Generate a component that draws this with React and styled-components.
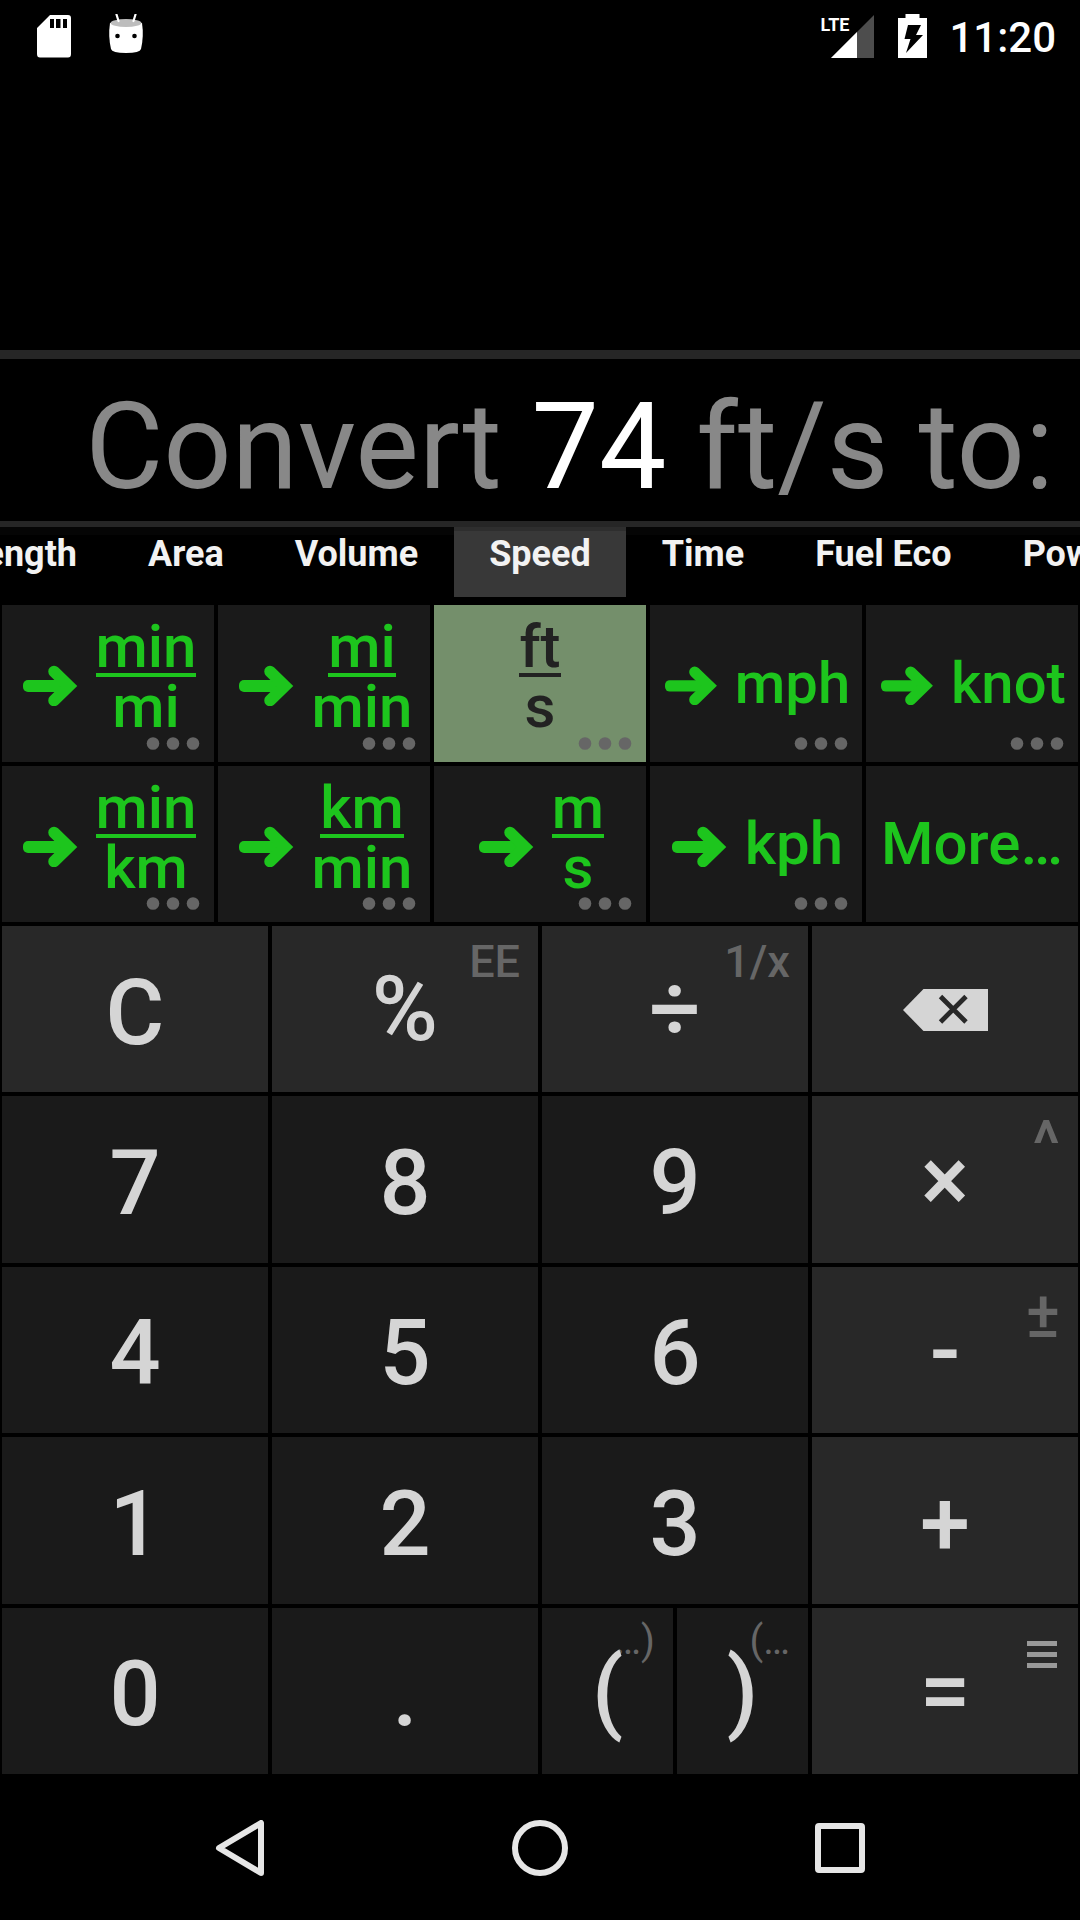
import React, { useLayoutEffect, useRef } from "react";
import styled, { createGlobalStyle } from "styled-components";

const GlobalStyle = createGlobalStyle`
  *, *::before, *::after { box-sizing: border-box; }
  body {
    margin: 0;
    background: #000;
    color: #fff;
    font-family: Roboto, "Noto Sans", sans-serif;
  }
  button {
    margin: 0;
    padding: 0;
    border: 0;
    background: none;
    color: inherit;
    font: inherit;
  }
  svg { display: block; flex: none; }
`;

const Screen = styled.div`
  display: flex;
  flex-direction: column;
  min-height: 100vh;
  overflow: hidden;
`;

const StatusBar = styled.header`
  display: flex;
  justify-content: space-between;
  align-items: center;
  height: 72px;
  padding: 0 24px 0 36px;
`;

const StatusGroup = styled.div`
  display: flex;
  align-items: center;
  gap: ${(p) => p.$gap}px;
`;

const Signal = styled.div`
  position: relative;
  margin-right: 2px;
`;

const NetworkType = styled.span`
  position: absolute;
  top: 0;
  left: -11px;
  font-size: 18px;
  line-height: 20px;
  font-weight: 700;
`;

const Clock = styled.time`
  padding-top: 3px;
  font-size: 42px;
  line-height: 48px;
  font-weight: 500;
`;

const History = styled.section`
  flex: 1 1 auto;
  min-height: 120px;
`;

const Display = styled.output`
  display: block;
  border-top: 9px solid #262626;
  border-bottom: 6px solid #262626;
  padding: 18px 26px 4px;
  font-size: 120px;
  line-height: 140px;
  text-align: right;
  white-space: nowrap;
  color: #888;
`;

const Amount = styled.span`
  color: #fff;
`;

const TabBar = styled.nav`
  display: flex;
  gap: 1px;
  position: relative;
  height: 76px;
  overflow: hidden;
  background: linear-gradient(#050505 8px, #000 8px);
`;

const Tab = styled.button`
  flex: none;
  height: 70px;
  padding: 0 35px 20px;
  border-top: 4px solid ${(p) => (p.$selected ? "#2e2e2e" : "transparent")};
  background: ${(p) => (p.$selected ? "#383838" : "transparent")};
  color: #f2f2f2;
  font-size: 36px;
  line-height: 42px;
  font-weight: 700;
`;

const UnitGrid = styled.section`
  display: grid;
  grid-template-columns: repeat(5, minmax(0, 1fr));
  grid-template-rows: repeat(2, 1fr);
  gap: 4px;
  min-height: 321px;
  padding: 2px;
`;

const UnitKey = styled.button`
  position: relative;
  display: flex;
  align-items: center;
  justify-content: center;
  background: ${(p) => (p.$selected ? "#748f6b" : "#1a1a1a")};
  color: ${(p) => (p.$selected ? "#222" : "#1dc51d")};
  font-size: ${(p) => (p.$compact ? 58 : 60)}px;
  line-height: 60px;
  font-weight: 500;
  white-space: nowrap;
`;

const ArrowIcon = styled.svg`
  width: ${(p) => (p.$compact ? 73 : 76)}px;
  height: ${(p) => (p.$compact ? 44 : 46)}px;
`;

const Fraction = styled.span`
  display: flex;
  flex-direction: column;
  align-items: center;
  margin-bottom: 8px;
`;

const Numerator = styled.span`
  line-height: 52px;
  border-bottom: 4px solid currentColor;
`;

const Denominator = styled.span`
  line-height: 60px;
`;

const MoreDots = styled.svg`
  position: absolute;
  right: 14px;
  bottom: 12px;
`;

const Keypad = styled.section`
  display: grid;
  grid-template-columns: repeat(8, minmax(0, 1fr));
  grid-template-rows: repeat(5, 1fr);
  gap: 4px;
  min-height: 852px;
  padding: 2px;
`;

const PadKey = styled.button`
  position: relative;
  grid-column: span ${(p) => (p.$half ? 1 : 2)};
  display: flex;
  align-items: center;
  justify-content: center;
  padding-top: ${(p) => (p.$symbol ? 2 : 9)}px;
  background: ${(p) => (p.$operator ? "#282828" : "#1a1a1a")};
  color: #d5d5d5;
  font-size: 90px;
  line-height: 106px;
  font-weight: 500;
`;

const KeyFace = styled.span`
  position: relative;
`;

const Hint = styled.span`
  position: absolute;
  top: 7px;
  right: 18px;
  color: #666;
  font-size: ${(p) => p.$size}px;
  line-height: 1.3;
  font-weight: ${(p) => p.$weight || 500};
`;

const HintIcon = styled.svg`
  position: absolute;
  top: 33px;
  right: 21px;
`;

const NavBar = styled.footer`
  display: flex;
  height: 144px;
  padding: 0 calc(100% / 12);
`;

const NavButton = styled.button`
  flex: 1;
  display: flex;
  align-items: center;
  justify-content: center;
`;

const TABS = ["Length", "Area", "Volume", "Speed", "Time", "Fuel Eco", "Power"];
const SELECTED_TAB = "Speed";

const UNITS = [
  { top: "min", bottom: "mi" },
  { top: "mi", bottom: "min" },
  { top: "ft", bottom: "s", selected: true },
  { name: "mph", compact: true },
  { name: "knot", compact: true },
  { top: "min", bottom: "km" },
  { top: "km", bottom: "min" },
  { top: "m", bottom: "s" },
  { name: "kph" },
];

const KEYS = [
  { face: "C", operator: true },
  { face: "%", operator: true, symbol: true, hint: "EE" },
  { face: "÷", operator: true, symbol: true, hint: "1/x" },
  { icon: "backspace", operator: true, symbol: true },
  { face: "7" },
  { face: "8" },
  { face: "9" },
  { face: "×", operator: true, symbol: true, hint: "^", hintSize: 64 },
  { face: "4" },
  { face: "5" },
  { face: "6" },
  { face: "-", operator: true, symbol: true, hint: "±", hintSize: 64 },
  { face: "1" },
  { face: "2" },
  { face: "3" },
  { face: "+", operator: true },
  { face: "0" },
  { face: "." },
  { face: "(", half: true, symbol: true, hint: "…)", hintSize: 40, hintWeight: 400 },
  { face: ")", half: true, symbol: true, hint: "(…", hintSize: 40, hintWeight: 400 },
  { face: "=", operator: true, symbol: true, menu: true },
];

function SdCard() {
  return (
    <svg width="36" height="44" viewBox="0 0 36 44" aria-hidden="true">
      <path
        fill="#fff"
        fillRule="evenodd"
        d="M14 1H32Q35 1 35 4V40Q35 43.500 32 43.500H4Q1 43.500 1 40V14ZM14 5V14H18V5ZM20 5V14H24.500V5ZM27 5V14H31V5Z"
      />
    </svg>
  );
}

function AndroidHead() {
  return (
    <svg width="36" height="44" viewBox="0 0 36 44" aria-hidden="true">
      <path
        fill="#fff"
        d="M2 9H34Q36 22 33 35Q32 39 18 39Q4 39 3 35Q0 22 2 9Z"
      />
      <ellipse cx="18" cy="9" rx="15.500" ry="4" fill="#bdbdbd" />
      <path
        stroke="#fff"
        strokeWidth="2.200"
        strokeLinecap="round"
        d="M8.500 0.500L10.500 7M27.500 0.500L25.500 7"
      />
      <circle cx="9.500" cy="22" r="2.300" />
      <circle cx="26.500" cy="22" r="2.300" />
    </svg>
  );
}

function SignalIcon() {
  return (
    <svg width="43" height="43" viewBox="0 0 43 43" aria-hidden="true">
      <path fill="#4d4d4d" d="M43 0V43H0Z" />
      <path fill="#fff" d="M26 17V43H0Z" />
    </svg>
  );
}

function BatteryIcon() {
  return (
    <svg width="29" height="44" viewBox="0 0 29 44" aria-hidden="true">
      <path fill="#fff" d="M7.500 0H21.500V4H29V44H0V4H7.500Z" />
      <path d="M10 11H23L18 21H25L8 39L12.500 25H6.500Z" />
    </svg>
  );
}

function Arrow({ compact }) {
  return (
    <ArrowIcon $compact={compact} viewBox="0 0 76 46" aria-hidden="true">
      <rect x="3" y="20" width="46" height="12" rx="5" fill="currentColor" />
      <path
        fill="none"
        stroke="currentColor"
        strokeWidth="11.500"
        strokeLinecap="round"
        d="M34 11.500L49 26L34 40.500"
      />
    </ArrowIcon>
  );
}

function Dots() {
  return (
    <MoreDots width="54" height="13" viewBox="0 0 54 13" fill="#666" aria-hidden="true">
      <circle cx="7" cy="6.500" r="6.300" />
      <circle cx="27" cy="6.500" r="6.300" />
      <circle cx="47" cy="6.500" r="6.300" />
    </MoreDots>
  );
}

function Tabs() {
  const bar = useRef(null);
  const current = useRef(null);

  // Keep the selected category in the middle of the strip.
  useLayoutEffect(() => {
    const tab = current.current;
    bar.current.scrollLeft =
      tab.offsetLeft + tab.offsetWidth / 2 - bar.current.clientWidth / 2;
  }, []);

  return (
    <TabBar ref={bar} aria-label="Unit types">
      {TABS.map((name) => (
        <Tab
          key={name}
          type="button"
          ref={name === SELECTED_TAB ? current : null}
          $selected={name === SELECTED_TAB}
        >
          {name}
        </Tab>
      ))}
    </TabBar>
  );
}

function Unit({ unit }) {
  return (
    <UnitKey type="button" $selected={unit.selected} $compact={unit.compact}>
      {!unit.selected && <Arrow compact={unit.compact} />}
      {unit.name ? (
        <span>{unit.name}</span>
      ) : (
        <Fraction>
          <Numerator>{unit.top}</Numerator>
          <Denominator>{unit.bottom}</Denominator>
        </Fraction>
      )}
      <Dots />
    </UnitKey>
  );
}

function Key({ item }) {
  return (
    <PadKey
      type="button"
      $operator={item.operator}
      $symbol={item.symbol}
      $half={item.half}
      aria-label={item.icon}
    >
      {item.hint && (
        <Hint $size={item.hintSize || 45} $weight={item.hintWeight}>
          {item.hint}
        </Hint>
      )}
      {item.menu && (
        <HintIcon width="30" height="28" viewBox="0 0 30 28" fill="#999" aria-hidden="true">
          <path d="M0 0H30V5H0ZM0 11H30V16H0ZM0 22H30V27H0Z" />
        </HintIcon>
      )}
      {item.icon ? (
        <svg width="85" height="42" viewBox="0 0 85 42" aria-hidden="true">
          <path fill="#d5d5d5" d="M20.500 0H85V42H20.500L0 21Z" />
          <path stroke="#282828" strokeWidth="4.800" d="M37.500 7.500L63 33M63 7.500L37.500 33" />
        </svg>
      ) : (
        <KeyFace>{item.face}</KeyFace>
      )}
    </PadKey>
  );
}

export default function App() {
  return (
    <Screen>
      <GlobalStyle />
      <StatusBar>
        <StatusGroup $gap={36}>
          <SdCard />
          <AndroidHead />
        </StatusGroup>
        <StatusGroup $gap={22}>
          <Signal>
            <SignalIcon />
            <NetworkType>LTE</NetworkType>
          </Signal>
          <BatteryIcon />
          <Clock>11:20</Clock>
        </StatusGroup>
      </StatusBar>
      <History aria-label="History" />
      <Display>
        Convert <Amount>74</Amount> ft/s to:
      </Display>
      <Tabs />
      <UnitGrid aria-label="Units">
        {UNITS.map((unit, i) => (
          <Unit key={i} unit={unit} />
        ))}
        <UnitKey type="button">More…</UnitKey>
      </UnitGrid>
      <Keypad aria-label="Keypad">
        {KEYS.map((item, i) => (
          <Key key={i} item={item} />
        ))}
      </Keypad>
      <NavBar>
        <NavButton type="button" aria-label="Back">
          <svg width="56" height="56" viewBox="0 0 56 56" aria-hidden="true">
            <path
              fill="none"
              stroke="#e6e6e6"
              strokeWidth="6"
              strokeLinejoin="round"
              d="M49 3V53L7 28Z"
            />
          </svg>
        </NavButton>
        <NavButton type="button" aria-label="Home">
          <svg width="56" height="56" viewBox="0 0 56 56" aria-hidden="true">
            <circle cx="28" cy="28" r="25" fill="none" stroke="#e6e6e6" strokeWidth="6" />
          </svg>
        </NavButton>
        <NavButton type="button" aria-label="Recent apps">
          <svg width="56" height="56" viewBox="0 0 56 56" aria-hidden="true">
            <rect
              x="6"
              y="6"
              width="44"
              height="44"
              rx="1"
              fill="none"
              stroke="#e6e6e6"
              strokeWidth="6"
              strokeLinejoin="round"
            />
          </svg>
        </NavButton>
      </NavBar>
    </Screen>
  );
}
